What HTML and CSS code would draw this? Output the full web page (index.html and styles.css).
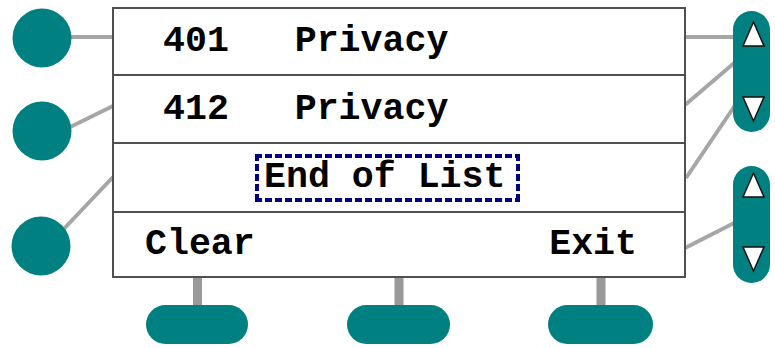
FILE: index.html
```html
<!DOCTYPE html>
<html>
<head>
    <title>Phone Display</title>
    <link rel="stylesheet" href="styles.css">
</head>
<body>
    <div class="stage">
        <svg class="wires" width="775" height="348" viewBox="0 0 775 348">
            <!-- connectors -->
            <g class="wire">
                <line x1="50" y1="37" x2="113" y2="37"/>
                <line x1="62" y1="131" x2="113" y2="106"/>
                <line x1="60" y1="233" x2="113" y2="177"/>
                <line x1="685" y1="37" x2="745" y2="37"/>
                <line x1="685" y1="105" x2="740" y2="58"/>
                <line x1="686" y1="178" x2="740" y2="98"/>
                <line x1="685" y1="248" x2="740" y2="220"/>
            </g>
            <g class="stem">
                <line x1="197.5" y1="278" x2="197.5" y2="310"/>
                <line x1="399" y1="278" x2="399" y2="310"/>
                <line x1="601" y1="278" x2="601" y2="310"/>
            </g>
            <!-- line keys -->
            <g class="key">
                <circle cx="42" cy="38" r="29.5"/>
                <circle cx="42" cy="131" r="29.5"/>
                <circle cx="41" cy="246" r="29.5"/>
                <rect x="733" y="11" width="37" height="121" rx="18.5"/>
                <rect x="733" y="166" width="37" height="117" rx="18.5"/>
                <rect x="146" y="305" width="102" height="39" rx="19.5"/>
                <rect x="347" y="305" width="103" height="39" rx="19.5"/>
                <rect x="548" y="305" width="105" height="39" rx="19.5"/>
            </g>
            <g class="arrow">
                <polygon points="753.5,22 764,46 743,46"/>
                <polygon points="743,97 764,97 753.5,121"/>
                <polygon points="753.5,173 764,197 743,197"/>
                <polygon points="743,247 764,247 753.5,271"/>
            </g>
        </svg>

        <div class="screen">
            <div class="row row-line">401&nbsp;&nbsp;&nbsp;Privacy</div>
            <div class="row row-line">412&nbsp;&nbsp;&nbsp;Privacy</div>
            <div class="row row-end">
                <span class="focus">End of List</span>
            </div>
            <div class="row row-soft">
                <span>Clear</span>
                <span>Exit</span>
            </div>
        </div>
    </div>
</body>
</html>
```

FILE: styles.css
```css
body {
    margin: 0;
    background: #fff;
}

.stage {
    position: relative;
    width: 775px;
    height: 348px;
}

.wires {
    position: absolute;
    left: 0;
    top: 0;
}

.wire line {
    stroke: #a6a6a6;
    stroke-width: 4;
}

.stem line {
    stroke: #999;
    stroke-width: 9;
}

.key {
    fill: #008080;
}

.arrow polygon {
    fill: #fff;
    stroke: #111;
    stroke-width: 1.5;
    stroke-linejoin: miter;
}

.screen {
    position: absolute;
    left: 112px;
    top: 7px;
    width: 570px;
    height: 267px;
    border: 2px solid #505050;
    background: #fff;
    display: flex;
    flex-direction: column;
    font-family: "Liberation Mono", "Courier New", monospace;
    font-weight: bold;
    font-size: 36.6px;
    color: #000;
}

.row {
    display: flex;
    align-items: center;
    white-space: nowrap;
}

.row + .row {
    border-top: 2px solid #505050;
}

.row-line {
    height: 66px;
    padding-left: 49px;
}

.row-line:first-child {
    height: 65px;
}

.row-end {
    height: 67px;
    padding-left: 141px;
}

/* focus box: short navy dashes all round */
.focus {
    padding: 3px 15px 3px 9px;
    line-height: 42px;
    background:
        repeating-linear-gradient(90deg, #000080 0 7px, transparent 7px 10px) left top / 100% 4px no-repeat,
        repeating-linear-gradient(90deg, #000080 0 7px, transparent 7px 10px) left bottom / 100% 4px no-repeat,
        repeating-linear-gradient(180deg, #000080 0 7px, transparent 7px 10px) left top / 4px 100% no-repeat,
        repeating-linear-gradient(180deg, #000080 0 7px, transparent 7px 10px) right top / 4px 100% no-repeat;
}

.row-soft {
    height: 63px;
    padding: 0 47px 0 31px;
    justify-content: space-between;
}
```
